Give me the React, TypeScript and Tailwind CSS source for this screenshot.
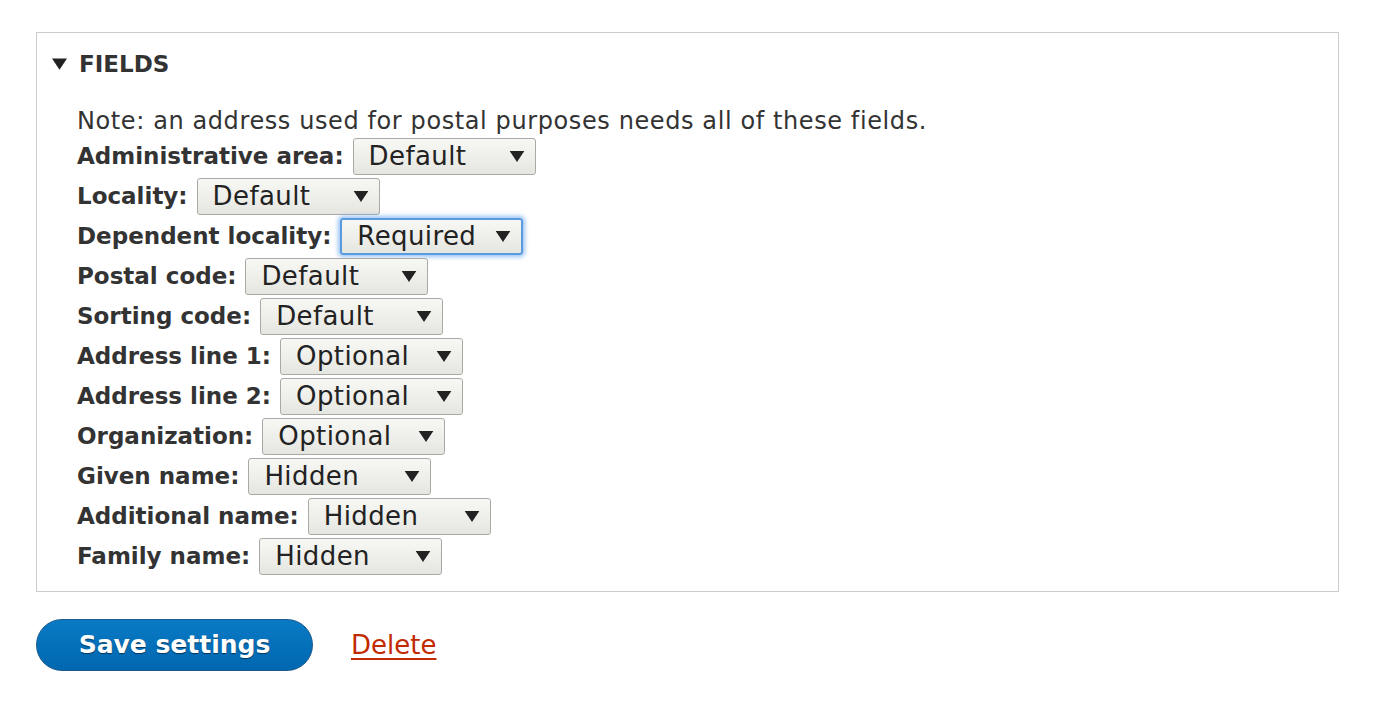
import { useState } from 'react';

type Row = { label: string; value: string; focused?: boolean };

const rows: Row[] = [
    { label: 'Administrative area:', value: 'Default' },
    { label: 'Locality:', value: 'Default' },
    { label: 'Dependent locality:', value: 'Required', focused: true },
    { label: 'Postal code:', value: 'Default' },
    { label: 'Sorting code:', value: 'Default' },
    { label: 'Address line 1:', value: 'Optional' },
    { label: 'Address line 2:', value: 'Optional' },
    { label: 'Organization:', value: 'Optional' },
    { label: 'Given name:', value: 'Hidden' },
    { label: 'Additional name:', value: 'Hidden' },
    { label: 'Family name:', value: 'Hidden' },
];

const Caret = ({ className = '' }: { className?: string }) => (
    <svg viewBox="0 0 16 12" className={className} fill="currentColor">
        <path d="M0 0h16L8 12z" />
    </svg>
);

const FakeSelect = ({ value, focused }: { value: string; focused?: boolean }) => (
    <div
        className={`flex items-center justify-between w-[183px] h-[37px] pl-[15px] pr-[10px] rounded-[3px] bg-gradient-to-b from-[#f7f7f4] to-[#e6e6e1] text-[#222] text-[26px] tracking-[0.4px] ${
            focused
                ? 'border-2 border-[#5a9be0] shadow-[0_0_4px_2px_rgba(110,170,240,0.7)]'
                : 'border border-[#a9a9a6]'
        }`}
    >
        <span>{value}</span>
        <Caret className="w-[16px] h-[11px] text-[#222]" />
    </div>
);

export default function App() {
    const [open, setOpen] = useState(true);

    return (
        <div className="min-h-screen bg-white pl-[36px] pt-[32px] text-[#333] text-[23px] font-['DejaVu_Sans','Verdana',sans-serif]">
            <div className="w-[1303px] h-[560px] border border-[#cccccc]">
                <button
                    onClick={() => setOpen(!open)}
                    className="flex items-center h-[36px] mt-[13px] pl-[15px] gap-[12px] font-bold"
                >
                    <Caret className="w-[15px] h-[12px] text-[#222]" />
                    <span>FIELDS</span>
                </button>

                {open && (
                    <div className="pl-[40px] mt-[24px]">
                        <p className="leading-[30px] h-[30px] text-[24px] tracking-[0.6px]">
                            Note: an address used for postal purposes needs all of these fields.
                        </p>
                        {rows.map((row) => (
                            <div key={row.label} className="flex items-center h-[40px] gap-[9px]">
                                <span className="font-bold">{row.label}</span>
                                <FakeSelect value={row.value} focused={row.focused} />
                            </div>
                        ))}
                    </div>
                )}
            </div>

            <div className="flex items-center mt-[27px] gap-[38px]">
                <button className="w-[277px] h-[52px] rounded-full bg-gradient-to-b from-[#0a7ac4] to-[#0067b0] border border-[#1c5a8c] text-white font-bold text-[25px] [text-shadow:0_1px_1px_rgba(0,0,0,0.5)]">
                    Save settings
                </button>
                <a href="#" className="text-[#c22a00] text-[26px] underline underline-offset-[4px]">
                    Delete
                </a>
            </div>
        </div>
    );
}
